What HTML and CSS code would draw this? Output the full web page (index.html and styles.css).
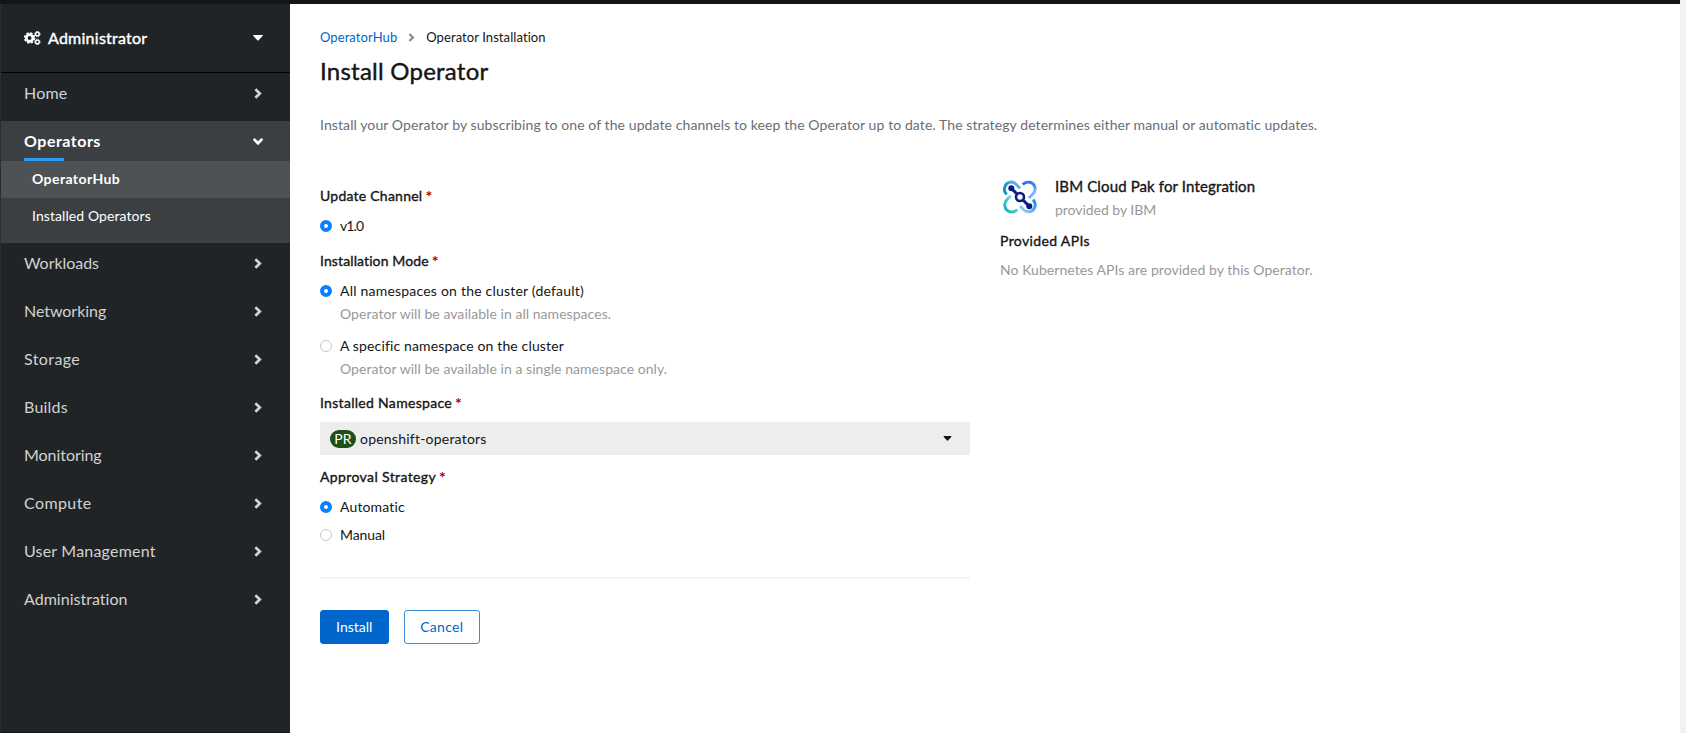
FILE: index.html
```html
<!DOCTYPE html>
<html lang="en">
<head>
<meta charset="utf-8">
<title>Install Operator</title>
<link rel="stylesheet" href="styles.css">
</head>
<body>
<svg class="defs" width="0" height="0" aria-hidden="true">
  <symbol id="chev" viewBox="0 0 8 11"><path d="M1.4 1.2 5.8 5.5 1.4 9.8" fill="none" stroke="currentColor" stroke-width="2.7"/></symbol>
  <symbol id="caret" viewBox="0 0 10 6"><path d="M.6 0h8.8q.9.1.4.8L5.6 5.3q-.6.6-1.2 0L.2.8Q-.3.1.6 0z" fill="currentColor"/></symbol>
</svg>
<div class="masthead"></div>
<div class="page">
  <nav class="sidebar">
    <button class="perspective">
      <svg class="cogs" viewBox="0 0 17 14">
        <circle cx="5.6" cy="7" r="3.3" fill="none" stroke="currentColor" stroke-width="2.7"/>
        <circle cx="5.6" cy="7" r="4.9" fill="none" stroke="currentColor" stroke-width="1.7" stroke-dasharray="2.3 1.55"/>
        <circle cx="13.4" cy="3.1" r="1.8" fill="none" stroke="currentColor" stroke-width="1.4"/>
        <circle cx="13.4" cy="3.1" r="2.7" fill="none" stroke="currentColor" stroke-width=".9" stroke-dasharray="1.3 .82"/>
        <circle cx="13.4" cy="10.9" r="1.8" fill="none" stroke="currentColor" stroke-width="1.4"/>
        <circle cx="13.4" cy="10.9" r="2.7" fill="none" stroke="currentColor" stroke-width=".9" stroke-dasharray="1.3 .82"/>
      </svg>
      <span class="perspective-name">Administrator</span>
      <svg class="caret"><use href="#caret"/></svg>
    </button>
    <ul class="nav">
      <li class="item"><span>Home</span><svg class="chev"><use href="#chev"/></svg></li>
      <li class="group">
        <div class="item current"><span>Operators</span><svg class="chev open"><use href="#chev"/></svg></div>
        <div class="sub active">OperatorHub</div>
        <div class="sub">Installed Operators</div>
      </li>
      <li class="item"><span class="t-work">Workloads</span><svg class="chev"><use href="#chev"/></svg></li>
      <li class="item"><span class="t-net">Networking</span><svg class="chev"><use href="#chev"/></svg></li>
      <li class="item"><span class="t-storage">Storage</span><svg class="chev"><use href="#chev"/></svg></li>
      <li class="item"><span>Builds</span><svg class="chev"><use href="#chev"/></svg></li>
      <li class="item"><span class="t-mon">Monitoring</span><svg class="chev"><use href="#chev"/></svg></li>
      <li class="item"><span class="t-compute">Compute</span><svg class="chev"><use href="#chev"/></svg></li>
      <li class="item"><span>User Management</span><svg class="chev"><use href="#chev"/></svg></li>
      <li class="item"><span class="t-admin">Administration</span><svg class="chev"><use href="#chev"/></svg></li>
    </ul>
  </nav>
  <main class="content">
    <div class="breadcrumb"><a>OperatorHub</a><svg class="crumb-chev" viewBox="0 0 8 11"><use href="#chev"/></svg><span>Operator Installation</span></div>
    <h1>Install Operator</h1>
    <p class="desc">Install your Operator by subscribing to one of the update channels to keep the Operator up to date. The strategy determines either manual or automatic updates.</p>
    <div class="columns">
      <form class="form">
        <div class="label l-channel"><span>Update Channel</span><b>*</b></div>
        <div class="radio r-version"><i class="dot on"></i><span>v1.0</span></div>
        <div class="label l-mode"><span>Installation Mode</span><b>*</b></div>
        <div class="radio r-all"><i class="dot on"></i><span>All namespaces on the cluster (default)</span></div>
        <div class="help">Operator will be available in all namespaces.</div>
        <div class="radio r-one"><i class="dot"></i><span>A specific namespace on the cluster</span></div>
        <div class="help">Operator will be available in a single namespace only.</div>
        <div class="label l-ns"><span>Installed Namespace</span><b>*</b></div>
        <div class="select"><span class="badge">PR</span><span class="value">openshift-operators</span><svg class="caret" viewBox="0 0 10 6"><use href="#caret"/></svg></div>
        <div class="label l-approval"><span>Approval Strategy</span><b>*</b></div>
        <div class="radio r-auto"><i class="dot on"></i><span>Automatic</span></div>
        <div class="radio r-manual"><i class="dot"></i><span>Manual</span></div>
        <div class="rule"></div>
        <div class="actions"><button type="button" class="btn primary">Install</button><button type="button" class="btn secondary">Cancel</button></div>
      </form>
      <aside class="provider">
        <div class="provider-head">
          <svg class="logo" viewBox="0 0 34 34">
            <defs>
              <linearGradient id="ga" x1="0" y1="1" x2="1" y2="0"><stop offset="0" stop-color="#0a8fc8"/><stop offset=".5" stop-color="#1b9ad8"/><stop offset="1" stop-color="#8fc4fb"/></linearGradient>
              <linearGradient id="gb" x1="0" y1="0" x2="1" y2="1"><stop offset="0" stop-color="#1f68f5"/><stop offset=".6" stop-color="#3f8bfa"/><stop offset="1" stop-color="#cfe6ff"/></linearGradient>
              <linearGradient id="gc" x1="0" y1="1" x2="1" y2="0"><stop offset="0" stop-color="#06b5b0"/><stop offset=".4" stop-color="#3cc5c8"/><stop offset="1" stop-color="#d4f2f6"/></linearGradient>
              <linearGradient id="gd" x1="0" y1="1" x2="1" y2="0"><stop offset="0" stop-color="#a5d8f2"/><stop offset="1" stop-color="#1384e0"/></linearGradient>
            </defs>
            <g fill="none" stroke-width="2.9">
              <path d="M3.8 14.3A6.8 6.8 0 0 1 2 6.5C3.6 1.6 9.5.6 13 4l4 4.2" stroke="url(#ga)"/>
              <path d="M19.7 4.6C23.5.6 30 1.6 31.8 6.6c.9 2.9 0 5.8-2 7.7L26 18" stroke="url(#gb)"/>
              <path d="M8 15.6 4.2 19.4c-4 4-3 10.4 2.4 12.2 2.9.9 5.8 0 7.7-2.2" stroke="url(#gc)"/>
              <path d="M17 26l3.6 3.7c3.4 3.4 9.6 2.4 11.2-2.5.9-2.9 0-5.8-1.8-7.6" stroke="url(#gd)"/>
            </g>
            <g stroke="#0a1a86" fill="none"><path d="M8.5 8.5l5.3 5.3M20.2 20.2l6 6" stroke-width="3"/><circle cx="17" cy="17" r="4" stroke-width="2.6"/></g>
            <g fill="#0a1a86"><circle cx="8.3" cy="8.3" r="3"/><circle cx="26.3" cy="26.3" r="3"/></g>
          </svg>
          <div>
            <div class="provider-name">IBM Cloud Pak for Integration</div>
            <div class="provider-by">provided by IBM</div>
          </div>
        </div>
        <div class="apis">Provided APIs</div>
        <div class="no-apis">No Kubernetes APIs are provided by this Operator.</div>
      </aside>
    </div>
  </main>
  <div class="gutter"></div>
</div>
</body>
</html>
```
FILE: styles.css
```css
* { box-sizing: border-box; }
body { margin: 0; height: 733px; overflow: hidden; background: #fff; color: #151515; font: 14px/20px Lato, "Open Sans", sans-serif; display: flex; flex-direction: column; }
.defs { position: absolute; }
button { font: inherit; }
h1, p, ul { margin: 0; padding: 0; }
.masthead { height: 4px; flex: none; background: #151515; border-right: 6px solid #f2f2f2; }
.page { flex: 1; display: flex; min-height: 0; }

/* Sidebar */
.sidebar { width: 290px; flex: none; background: #212427; border-left: 1px solid #2b2e31; border-bottom: 1px solid #151515; color: #d2d2d2; font-size: 16px; line-height: 24px; }
.perspective { display: flex; align-items: center; width: 100%; height: 69px; padding: 0 27px 0 23px; border: 0; border-bottom: 1px solid #030303; background: none; color: #fff; }
.cogs { width: 17px; height: 14px; margin-right: 7px; }
.perspective-name { letter-spacing: .25px; -webkit-text-stroke: .4px; }
.caret { width: 10px; height: 6px; margin-left: auto; }
.nav { list-style: none; display: flex; flex-direction: column; gap: 8px; }
.item { display: flex; align-items: center; justify-content: space-between; height: 40px; padding: 0 28px 0 23px; letter-spacing: .2px; }
.chev { width: 8px; height: 11px; }
.chev.open { transform: rotate(90deg); }
.t-admin { letter-spacing: .02px; }
.t-work, .t-net, .t-mon { letter-spacing: -.05px; }
.t-storage, .t-compute { letter-spacing: .4px; }
.group { height: 122px; margin-bottom: -8px; background: #3c3f42; color: #fff; }
.current { font-weight: 700; letter-spacing: .5px; background: linear-gradient(#2b9af3, #2b9af3) 23px 37px / 40px 3px no-repeat; }
.sub { height: 37px; padding: 0 31px; font-size: 14px; line-height: 36px; letter-spacing: .08px; }
.sub.active { background: #4f5255; font-weight: 700; letter-spacing: .42px; }

/* Main content */
.content { flex: 1; padding: 23px 30px 0; }
.breadcrumb { display: flex; align-items: center; height: 20px; font-size: 13px; letter-spacing: .08px; }
.breadcrumb a { color: #06c; }
.crumb-chev { width: 7px; height: 9px; margin: 0 11px; color: #8a8d90; }
h1 { margin-top: 8px; font-size: 24px; line-height: 32px; font-weight: 400; letter-spacing: .24px; -webkit-text-stroke: .4px; }
.desc { margin-top: 28px; height: 20px; color: #6a6e73; letter-spacing: .092px; white-space: nowrap; }
.columns { display: grid; grid-template-columns: 650px 1fr; column-gap: 30px; margin-top: 41px; }

/* Subscription form */
.form { padding-top: 10px; }
.label { display: flex; height: 20px; gap: 3px; }
.label span { -webkit-text-stroke: .35px; }
.label b { color: #a30000; font-size: 16px; }
.l-channel { letter-spacing: .24px; }
.l-mode { margin-top: 15px; letter-spacing: .11px; }
.l-ns { margin-top: 14px; letter-spacing: .3px; }
.l-approval { margin-top: 12px; letter-spacing: .38px; }
.radio { display: flex; align-items: center; height: 20px; gap: 8px; }
.dot { width: 12px; height: 12px; border-radius: 50%; border: 1px solid #c8c8c8; background: #fff; }
.dot.on { border: 4px solid #0b80ff; }
.r-version { margin-top: 10px; letter-spacing: -.9px; }
.r-all { margin-top: 10px; letter-spacing: .21px; }
.r-one { margin-top: 12px; letter-spacing: .14px; }
.r-auto { margin-top: 10px; letter-spacing: .14px; }
.r-manual { margin-top: 8px; letter-spacing: -.1px; }
.help { margin-top: 3px; padding-left: 20px; color: #999; letter-spacing: .05px; }
.select { display: flex; align-items: center; height: 33px; margin-top: 9px; padding: 0 18px 0 10px; background: #ededed; }
.select .caret { width: 9px; height: 5px; }
.badge { width: 26px; height: 18px; margin-right: 4px; border-radius: 9px; background: #1e4f18; color: #fff; line-height: 18px; text-align: center; letter-spacing: .2px; }
.value { letter-spacing: .22px; }
.rule { height: 2px; margin-top: 32px; background: #f4f4f4; }
.actions { display: flex; gap: 15.5px; margin-top: 31px; }
.btn { height: 34px; padding: 0; border-radius: 3px; }
.primary { width: 68.5px; border: 1px solid #06c; background: #06c; color: #fff; }
.secondary { width: 75.5px; border: 1px solid #3d8bdc; background: #fff; color: #06c; letter-spacing: .3px; }

/* Provider summary */
.provider-head { display: flex; gap: 18px; padding: 0 0 0 3px; }
.logo { width: 34px; height: 34px; margin-top: 4px; }
.provider-name { margin-top: -2px; font-size: 15px; line-height: 24px; letter-spacing: .13px; -webkit-text-stroke: .35px; }
.provider-by { color: #999; letter-spacing: -.04px; line-height: 24px; }
.apis { margin-top: 9px; letter-spacing: .36px; -webkit-text-stroke: .35px; }
.no-apis { margin-top: 9px; color: #999; letter-spacing: .05px; }
.gutter { width: 6px; flex: none; background: #f2f2f2; }
```
